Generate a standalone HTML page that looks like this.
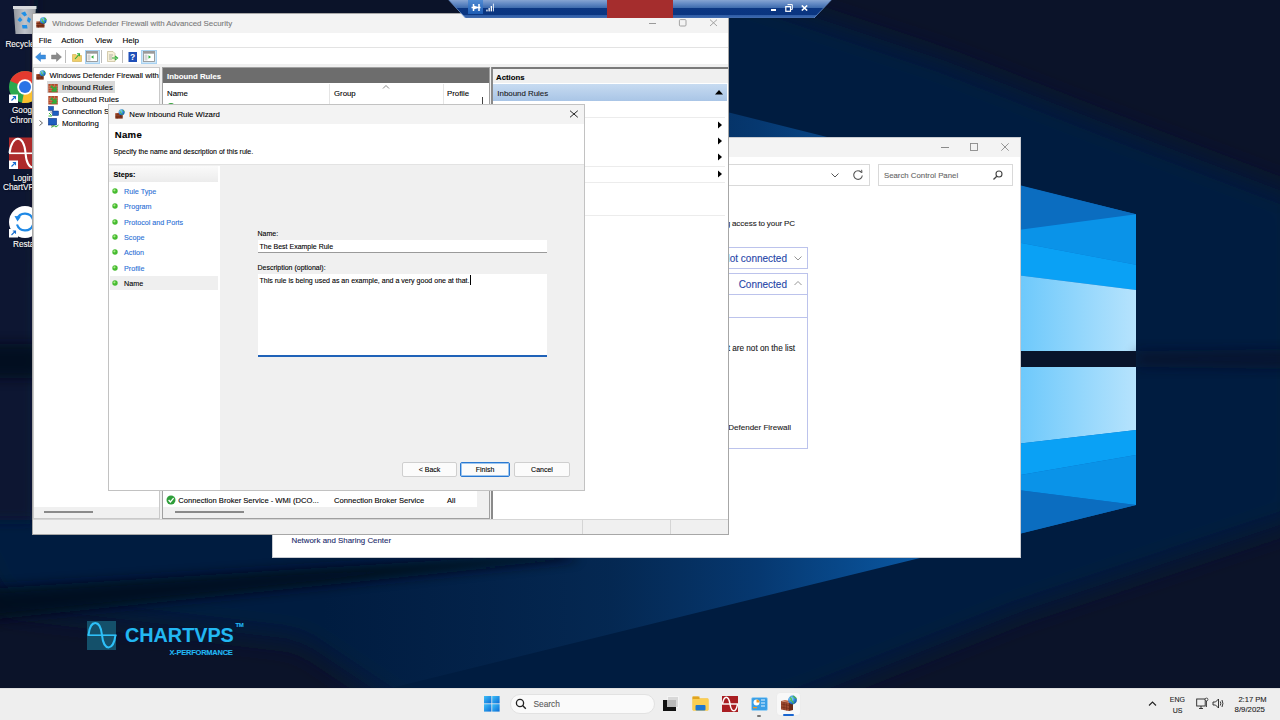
<!DOCTYPE html>
<html><head><meta charset="utf-8">
<style>
*{margin:0;padding:0;box-sizing:border-box}
html,body{width:1280px;height:720px;overflow:hidden}
body{position:relative;background:#0b1a36;font-family:"Liberation Sans",sans-serif;font-size:8px;color:#000}
.a{position:absolute}
.t{position:absolute;white-space:nowrap;line-height:1;-webkit-text-stroke:0.1px currentColor}
</style></head><body>

<!-- WALLPAPER -->
<svg class="a" style="left:0;top:0" width="1280" height="720" viewBox="0 0 1280 720">
<defs>
<linearGradient id="lp" x1="1021" y1="0" x2="1136" y2="0" gradientUnits="userSpaceOnUse">
<stop offset="0" stop-color="#6ec9fb"/><stop offset="1" stop-color="#b6e3fd"/>
</linearGradient>
<linearGradient id="beam" x1="200" y1="0" x2="1021" y2="0" gradientUnits="userSpaceOnUse">
<stop offset="0.15" stop-color="#0a2a55" stop-opacity="0"/><stop offset="0.35" stop-color="#062a55" stop-opacity="0.45"/><stop offset="0.5" stop-color="#052a55" stop-opacity="0.85"/><stop offset="0.68" stop-color="#063870"/><stop offset="0.88" stop-color="#0a58a3"/><stop offset="1" stop-color="#0b6cc0"/>
</linearGradient>
<filter id="bl" x="-20%" y="-20%" width="140%" height="140%"><feGaussianBlur stdDeviation="14"/></filter>
<filter id="bl2" x="-20%" y="-50%" width="140%" height="200%"><feGaussianBlur stdDeviation="6"/></filter>
</defs>
<rect width="1280" height="720" fill="#0b1329"/>
<!-- blue glow region -->
<polygon filter="url(#bl)" points="640,-40 762,0 943,60 1132,134 1300,198 1300,518 1020,612 800,700 640,740 420,720 300,640 0,605 -40,520 -40,300 32,260 200,200 500,80 700,-40" fill="#061c40"/>
<!-- left strip darker -->
<rect filter="url(#bl2)" x="-30" y="-30" width="64" height="550" fill="#0a1430"/>
<!-- left dark bar projection -->
<rect filter="url(#bl2)" x="-20" y="344" width="80" height="34" fill="#060c1c" opacity="0.8"/>
<!-- beams (T: y=185.9+0.246(x-1021); B: y=533.5-0.245(x-1021)) -->
<polygon points="0,-69.7 1136,214.2 1136,505 0,784" fill="url(#beam)"/>
<!-- top pane -->
<polygon points="1000,180.7 1136,214.2 1000,232.4" fill="#0b6dc0"/>
<polygon points="1000,232.4 1136,214.2 1136,264.8 1000,239" fill="#0a93e8"/>
<polygon points="1000,239 1136,264.8 1136,290 1000,273" fill="#0aa1f5"/>
<polygon points="1000,273 1136,290 1136,351 1000,351" fill="url(#lp)"/>
<!-- dark bar -->
<polygon filter="url(#bl2)" points="1136,351 1300,349 1300,369 1136,367" fill="#071024" opacity="0.5"/>
<rect x="1000" y="351" width="136" height="16" fill="#08142b"/>
<!-- lower pane -->
<polygon points="1000,367 1136,367 1136,430 1000,446" fill="url(#lp)"/>
<polygon points="1000,446 1136,430 1136,455 1000,478.6" fill="#0aa1f5"/>
<polygon points="1000,478.6 1136,455 1136,505 1000,487.8" fill="#0a93e8"/>
<polygon points="1000,487.8 1136,505 1000,538.6" fill="#0b6dc0"/>
<!-- dark projected bar below CP -->
<polygon filter="url(#bl2)" points="-20,589 560,553 580,559 -20,621" fill="#050b1a" opacity="0.85"/>
</svg>

<!-- DESKTOP ICONS -->
<svg class="a" style="left:0;top:0" width="40" height="260" viewBox="0 0 40 260">
<defs>
<linearGradient id="rb" x1="0" y1="0" x2="1" y2="0"><stop offset="0" stop-color="#9a9ea4"/><stop offset="0.5" stop-color="#c9cdd2"/><stop offset="1" stop-color="#a5a9ae"/></linearGradient>
</defs>
<!-- recycle bin -->
<path d="M13.5 6.5 H36 L34 34 H15.5 Z" fill="url(#rb)" opacity="0.95"/>
<rect x="13" y="6" width="23.5" height="3" fill="#d8dadd"/>
<g fill="#1f8fe6">
<path d="M21 13 L25 11.5 L27 15 L24.5 16.5 Z"/>
<path d="M17.5 20 L20 17 L22.5 20 L20 22 Z"/>
<path d="M22 25 L27 25 L27.5 28.5 L22.5 28.5 Z"/>
<path d="M28 17 L31 19 L29.5 23 L27 21 Z"/>
</g>
<!-- chrome -->
<circle cx="25" cy="87" r="16" fill="#2da94f"/>
<path d="M25 87 L10.2 80.9 A16 16 0 0 1 41 87 Z" fill="#e53a2f"/>
<path d="M25 87 L41 87 A16 16 0 0 1 25 103 L22 103 Z" fill="#fbc02d"/>
<circle cx="25" cy="87" r="7.8" fill="#fff"/>
<circle cx="25" cy="87" r="6" fill="#2b74e6"/>
<!-- chartvps login -->
<rect x="9" y="137.5" width="32" height="31.5" fill="#ad2a2b"/>
<rect x="9" y="152.5" width="32" height="1.6" fill="#fff"/>
<path d="M9.5 153 C12 134,24 134,25.5 153 S38 172,40 153" fill="none" stroke="#fff" stroke-width="2"/>
<!-- restart -->
<circle cx="25" cy="222" r="16" fill="#fff"/>
<path d="M17 219 A8.5 8.5 0 0 1 33 219.5" fill="none" stroke="#1e88e5" stroke-width="2.2"/>
<path d="M33 225 A8.5 8.5 0 0 1 17 224.5" fill="none" stroke="#1e88e5" stroke-width="2.2"/>
<path d="M14.5 216 L17.5 221.5 L21 216.5 Z" fill="#1e88e5"/>
<!-- shortcut arrows -->
<g>
<rect x="9" y="94.5" width="9" height="8.5" fill="#fff"/>
<path d="M11.5 100.5 L15.5 96.5 M12.8 96.5 H15.5 V99.2" fill="none" stroke="#1a6fd0" stroke-width="1.1"/>
<rect x="9" y="160.5" width="9" height="8.5" fill="#fff"/>
<path d="M11.5 166.5 L15.5 162.5 M12.8 162.5 H15.5 V165.2" fill="none" stroke="#1a6fd0" stroke-width="1.1"/>
<rect x="9" y="229" width="9" height="8.5" fill="#fff"/>
<path d="M11.5 235 L15.5 231 M12.8 231 H15.5 V233.7" fill="none" stroke="#1a6fd0" stroke-width="1.1"/>
</g>
</svg>
<div class="t" style="left:5.4px;top:40.7px;color:#fff;font-size:8.2px;text-shadow:0 0 2px #000">Recycle</div>
<div class="t" style="left:12px;top:107px;color:#fff;font-size:8.2px;text-shadow:0 0 2px #000">Goog</div>
<div class="t" style="left:10px;top:117.4px;color:#fff;font-size:8.2px;text-shadow:0 0 2px #000">Chron</div>
<div class="t" style="left:13px;top:174.6px;color:#fff;font-size:8.2px;text-shadow:0 0 2px #000">Login</div>
<div class="t" style="left:3px;top:183.6px;color:#fff;font-size:8.2px;text-shadow:0 0 2px #000">ChartVP</div>
<div class="t" style="left:13px;top:241.2px;color:#fff;font-size:8.2px;text-shadow:0 0 2px #000">Resta</div>

<!-- CHARTVPS LOGO -->
<div class="a" style="left:87.3px;top:620.6px;width:29.2px;height:29.2px;background:#14506a"></div>
<svg class="a" style="left:87px;top:620px" width="31" height="31" viewBox="0 0 31 31"><path d="M0.5 15.2 H29.5" stroke="#2ec0f8" stroke-width="1.6"/><path d="M1.5 15.2 C3 -1,13.5 -1,15 15.2 S26.5 31.5,28.5 15.2" fill="none" stroke="#2ec0f8" stroke-width="2"/></svg>
<div class="t" style="left:125px;top:625.5px;color:#22b8f2;font-size:19.8px;font-weight:bold">CHARTVPS</div>
<div class="t" style="left:235.5px;top:622.3px;color:#22b8f2;font-size:6px;font-weight:bold;letter-spacing:-0.3px">TM</div>
<div class="t" style="left:169.6px;top:649px;color:#22b8f2;font-size:7.5px;font-weight:bold;letter-spacing:-0.25px">X-PERFORMANCE</div>


<svg width="0" height="0" style="position:absolute"><defs>
<linearGradient id="brk" x1="0" y1="0" x2="0" y2="1"><stop offset="0" stop-color="#b25a3a"/><stop offset="1" stop-color="#7a2c14"/></linearGradient>
<radialGradient id="glb" cx="0.35" cy="0.35" r="0.7"><stop offset="0" stop-color="#9fe0ff"/><stop offset="0.6" stop-color="#2a86d8"/><stop offset="1" stop-color="#1657a8"/></radialGradient>
<symbol id="fwi" viewBox="0 0 10 10">
 <rect x="0.3" y="4" width="7.4" height="5.6" fill="url(#brk)"/>
 <path d="M0.3 5.9 H7.7 M0.3 7.8 H7.7 M3 4 V5.9 M5.6 5.9 V7.8 M2.2 7.8 V9.6" stroke="#5a1e0c" stroke-width="0.5"/>
 <circle cx="6.6" cy="3.2" r="3" fill="url(#glb)"/>
 <path d="M5 1.6 Q6.2 2.4 5.6 3.6 Q6.8 4 7.4 5.6 M7.6 0.8 Q8.6 2 9.4 2.6" fill="none" stroke="#4fbf3a" stroke-width="1"/>
</symbol>
<symbol id="inb" viewBox="0 0 11 10">
 <rect x="0.3" y="1" width="9.5" height="8.5" fill="#b04a2c"/>
 <path d="M0.3 3.2 H9.8 M0.3 5.4 H9.8 M0.3 7.6 H9.8 M3 1 V3.2 M6.5 1 V3.2 M1.8 3.2 V5.4 M5 3.2 V5.4 M8.2 3.2 V5.4 M3 5.4 V7.6 M6.5 5.4 V7.6" stroke="#e0a080" stroke-width="0.45"/>
 <path d="M3 3 L7 7 M7.8 3.6 V7.8 H3.6" fill="none" stroke="#2fae3a" stroke-width="1.8"/>
</symbol>
<symbol id="conn" viewBox="0 0 11 11">
 <rect x="0.5" y="0.5" width="5" height="4" fill="#1f5fc0" stroke="#0b2f80" stroke-width="0.5"/>
 <rect x="4.5" y="5" width="6" height="4.5" fill="#1f5fc0" stroke="#0b2f80" stroke-width="0.5"/>
 <path d="M1 7 L3.5 9.5 M0.5 10 H4" stroke="#3ab83a" stroke-width="1"/>
 <path d="M3 4.5 V7 H4.5" fill="none" stroke="#777" stroke-width="0.6"/>
</symbol>
<symbol id="mon" viewBox="0 0 11 11">
 <rect x="0.5" y="0.5" width="8" height="6.5" fill="#1f5fc0" stroke="#0b2f80" stroke-width="0.6"/>
 <rect x="3" y="7" width="3" height="1.5" fill="#888"/>
 <path d="M3.5 9.5 L6 7.5 L8 9 L10.5 7" fill="none" stroke="#3ab83a" stroke-width="1"/>
</symbol>
<symbol id="winbtn" viewBox="0 0 12 11">
 <rect x="0.5" y="0.5" width="11" height="10" fill="#fff" stroke="#8a8a8a" stroke-width="0.8"/>
 <rect x="0.5" y="0.5" width="11" height="2.2" fill="#9a9a9a"/>
 <rect x="1.5" y="3.5" width="3" height="6" fill="#d5d5d5"/>
</symbol>
</defs></svg>
<div class="a" style="left:272px;top:137px;width:749px;height:421px;background:#fff;border:1px solid #c9ccd2"></div>
<div class="a" style="left:273px;top:138px;width:747px;height:19px;background:#f3f3f3"></div>
<div class="a" style="left:941px;top:147px;width:8px;height:1px;background:#8a8a8a"></div>
<svg class="a" style="left:969px;top:142px;" width="10" height="10" viewBox="0 0 10 10"><rect x="1.5" y="1.5" width="7" height="7" fill="none" stroke="#8a8a8a" stroke-width="0.9"/></svg>
<svg class="a" style="left:1000px;top:142px;" width="10" height="10" viewBox="0 0 10 10"><path d="M1.3 1.3 L8.7 8.7 M8.7 1.3 L1.3 8.7" stroke="#8a8a8a" stroke-width="0.9"/></svg>
<div class="a" style="left:700px;top:164px;width:170px;height:22px;background:#fff;border:1px solid #d9d9d9"></div>
<svg class="a" style="left:830px;top:170px;" width="10" height="10" viewBox="0 0 10 10"><path d="M1.5 3.5 L5 7 L8.5 3.5" fill="none" stroke="#555" stroke-width="1"/></svg>
<svg class="a" style="left:852px;top:169px;" width="12" height="12" viewBox="0 0 12 12"><path d="M9.5 3.5 A4.3 4.3 0 1 0 10.3 6.5" fill="none" stroke="#555" stroke-width="1.1"/><path d="M7.5 2 L10 3.6 L9.6 0.8" fill="none" stroke="#555" stroke-width="1"/></svg>
<div class="a" style="left:878px;top:164px;width:135px;height:22px;background:#fff;border:1px solid #d9d9d9"></div>
<div class="t" style="left:884px;top:171.99px;font-size:7.8px;color:#666;">Search Control Panel</div>
<svg class="a" style="left:992px;top:169px;" width="12" height="12" viewBox="0 0 12 12"><circle cx="7" cy="5" r="3" fill="none" stroke="#444" stroke-width="1.1"/><line x1="4.8" y1="7.2" x2="1.5" y2="10.5" stroke="#444" stroke-width="1.3"/></svg>
<div class="t" style="left:560px;top:220.49px;font-size:8.0px;color:#1a1a1a;width:235px;text-align:right;word-spacing:-0.6px">Help protect your PC by allowing access to your PC</div>
<div class="a" style="left:600px;top:247px;width:208px;height:22px;background:#fff;border:1px solid #bcc3ec"></div>
<div class="t" style="left:600px;top:254.02px;font-size:10.0px;color:#2545a8;text-align:right;width:187px">Not connected</div>
<svg class="a" style="left:792px;top:252px;" width="12" height="12" viewBox="0 0 12 12"><path d="M2.5 4.5 L6 8 L9.5 4.5" fill="none" stroke="#8a8a8a" stroke-width="0.9"/></svg>
<div class="a" style="left:600px;top:273px;width:208px;height:176px;background:#fff;border:1px solid #bcc3ec"></div>
<div class="a" style="left:600px;top:294px;width:208px;height:24px;border-top:1px solid #bcc3ec;border-bottom:1px solid #bcc3ec"></div>
<div class="t" style="left:600px;top:280.02px;font-size:10.0px;color:#2545a8;text-align:right;width:187px">Connected</div>
<svg class="a" style="left:792px;top:277px;" width="12" height="12" viewBox="0 0 12 12"><path d="M2.5 8 L6 4.5 L9.5 8" fill="none" stroke="#8a8a8a" stroke-width="0.9"/></svg>
<div class="t" style="left:560px;top:344.56px;font-size:8.2px;color:#1a1a1a;text-align:right;width:235px">Block all connections to apps that are not on the list</div>
<div class="t" style="left:560px;top:424.49px;font-size:8.0px;color:#1a1a1a;text-align:right;width:231px">Windows Defender Firewall</div>
<div class="t" style="left:291.5px;top:537.30px;font-size:7.9px;color:#1a2a6a;">Network and Sharing Center</div>
<div class="a" style="left:32px;top:13px;width:697px;height:522px;background:#fff;border:1px solid #a7a7a7"></div>
<div class="a" style="left:33px;top:14px;width:695px;height:19px;background:#f3f3f3"></div>
<svg class="a" style="left:36px;top:17px;" width="11" height="11" viewBox="0 0 11 11"><use href="#fwi" width="11" height="11"/></svg>
<div class="t" style="left:52.3px;top:20.40px;font-size:7.9px;color:#7a7a7a;">Windows Defender Firewall with Advanced Security</div>
<div class="a" style="left:649px;top:22.5px;width:7px;height:1px;background:#9a9a9a"></div>
<svg class="a" style="left:678px;top:18px;" width="10" height="10" viewBox="0 0 10 10"><rect x="1.4" y="1.6" width="6.6" height="6.4" rx="1" fill="none" stroke="#9a9a9a" stroke-width="0.9"/></svg>
<svg class="a" style="left:709px;top:18px;" width="10" height="10" viewBox="0 0 10 10"><path d="M1 1.6 L8 8 M8 1.6 L1 8" stroke="#9a9a9a" stroke-width="0.9"/></svg>
<div class="a" style="left:33px;top:33px;width:695px;height:15px;background:#fff;border-bottom:1px solid #e3e3e3"></div>
<div class="t" style="left:38.7px;top:36.79px;font-size:8.0px;color:#000;">File</div>
<div class="t" style="left:61.2px;top:36.79px;font-size:8.0px;color:#000;">Action</div>
<div class="t" style="left:95px;top:36.79px;font-size:8.0px;color:#000;">View</div>
<div class="t" style="left:122.6px;top:36.79px;font-size:8.0px;color:#000;">Help</div>
<div class="a" style="left:33px;top:48px;width:695px;height:16px;background:#fff"></div>
<div class="a" style="left:33px;top:64px;width:695px;height:3px;background:#f0f0f0"></div>
<svg class="a" style="left:35px;top:52px;" width="11" height="10" viewBox="0 0 11 10"><path d="M0.5 5 L5.5 0.5 V3 H10.5 V7 H5.5 V9.5 Z" fill="#3b8fe0" stroke="#2a6fc0" stroke-width="0.4"/></svg>
<svg class="a" style="left:51px;top:52px;" width="11" height="10" viewBox="0 0 11 10"><path d="M10.5 5 L5.5 0.5 V3 H0.5 V7 H5.5 V9.5 Z" fill="#8a8a8a" stroke="#777" stroke-width="0.4"/></svg>
<div class="a" style="left:65px;top:50px;width:1px;height:13px;background:#bdbdbd"></div>
<svg class="a" style="left:72px;top:52px;" width="10" height="10" viewBox="0 0 10 10"><path d="M0.5 2.5 H4 L5 3.5 H9.5 V9.5 H0.5 Z" fill="#f0cf6a" stroke="#c9a030" stroke-width="0.5"/><path d="M3 7 L7 2.5 M5 1.8 H7.5 V4.3" fill="none" stroke="#2fae3a" stroke-width="1.1"/></svg>
<div class="a" style="left:84.5px;top:49.5px;width:15px;height:14px;background:#cde6f7;border:1px solid #a8d2f2"></div>
<svg class="a" style="left:86px;top:51px;" width="12" height="11" viewBox="0 0 12 11"><use href="#winbtn" width="12" height="11"/><path d="M5 6 L7.5 4.2 V7.8 Z" fill="#2fae3a"/></svg>
<div class="a" style="left:101px;top:50px;width:1px;height:13px;background:#bdbdbd"></div>
<svg class="a" style="left:107px;top:51px;" width="12" height="11" viewBox="0 0 12 11"><path d="M0.5 0.5 H6 L8 2.5 V10.5 H0.5 Z" fill="#f6f0d8" stroke="#b0a070" stroke-width="0.5"/><path d="M2 4 H6 M2 6 H5 M2 8 H5" stroke="#888" stroke-width="0.6"/><path d="M5 7 H9 M8 5 L10.5 7 L8 9" fill="none" stroke="#2fae3a" stroke-width="1.2"/></svg>
<div class="a" style="left:122px;top:50px;width:1px;height:13px;background:#bdbdbd"></div>
<svg class="a" style="left:128px;top:52px;" width="10" height="10" viewBox="0 0 10 10"><rect x="0.5" y="0" width="8.5" height="10" fill="#1f4fb8"/><text x="4.7" y="8.3" font-size="8.5" font-family="Liberation Sans" font-weight="bold" fill="#fff" text-anchor="middle">?</text></svg>
<div class="a" style="left:141px;top:49.5px;width:16px;height:14px;background:#cde6f7;border:1px solid #a8d2f2"></div>
<svg class="a" style="left:143px;top:51px;" width="12" height="11" viewBox="0 0 12 11"><use href="#winbtn" width="12" height="11"/><path d="M8 6 L5.5 4.2 V7.8 Z" fill="#2fae3a" transform="translate(0,0)"/></svg>
<div class="a" style="left:33px;top:67px;width:127px;height:452px;background:#fff;border:1px solid #c9c9c9"></div>
<div class="a" style="left:34px;top:507px;width:125px;height:11px;background:#f0f0f0"></div>
<div class="a" style="left:44px;top:511px;width:49px;height:2px;background:#8a8a8a"></div>
<div class="a" style="left:47px;top:81px;width:68px;height:12px;background:#d9d9d9"></div>
<svg class="a" style="left:36px;top:70px;" width="10" height="10" viewBox="0 0 10 10"><use href="#fwi" width="10" height="10"/></svg>
<svg class="a" style="left:48px;top:83px;" width="11" height="10" viewBox="0 0 11 10"><use href="#inb" width="11" height="10"/></svg>
<svg class="a" style="left:48px;top:95px;" width="11" height="10" viewBox="0 0 11 10"><use href="#inb" width="11" height="10"/></svg>
<svg class="a" style="left:48px;top:106px;" width="11" height="11" viewBox="0 0 11 11"><use href="#conn" width="11" height="11"/></svg>
<svg class="a" style="left:48px;top:118px;" width="11" height="11" viewBox="0 0 11 11"><use href="#mon" width="11" height="11"/></svg>
<div class="t" style="left:49.5px;top:72.00px;font-size:7.7px;color:#000;">Windows Defender Firewall with Advanced Security</div>
<div class="t" style="left:62px;top:84.00px;font-size:7.9px;color:#000;">Inbound Rules</div>
<div class="t" style="left:62px;top:96.00px;font-size:7.9px;color:#000;">Outbound Rules</div>
<div class="t" style="left:62px;top:108.00px;font-size:7.9px;color:#000;">Connection Security Rules</div>
<div class="t" style="left:62px;top:120.00px;font-size:7.9px;color:#000;">Monitoring</div>
<svg class="a" style="left:37px;top:119px;" width="8" height="8" viewBox="0 0 8 8"><path d="M2.5 1.5 L5.5 4 L2.5 6.5" fill="none" stroke="#666" stroke-width="1"/></svg>
<div class="a" style="left:160px;top:67px;width:2px;height:452px;background:#f0f0f0"></div>
<div class="a" style="left:162px;top:67px;width:328px;height:452px;background:#fff;border:1px solid #a0a0a0"></div>
<div class="a" style="left:163px;top:68px;width:326px;height:15px;background:#6d6d6d"></div>
<div class="t" style="left:167px;top:72.50px;font-size:7.8px;color:#fff;font-weight:bold;">Inbound Rules</div>
<div class="t" style="left:167px;top:89.99px;font-size:7.8px;color:#000;">Name</div>
<div class="t" style="left:334px;top:89.99px;font-size:7.8px;color:#000;">Group</div>
<div class="t" style="left:447px;top:89.99px;font-size:7.8px;color:#000;">Profile</div>
<div class="a" style="left:329px;top:84px;width:1px;height:20px;background:#e5e5e5"></div>
<div class="a" style="left:443px;top:84px;width:1px;height:20px;background:#e5e5e5"></div>
<svg class="a" style="left:382px;top:84px;" width="8" height="6" viewBox="0 0 8 6"><path d="M1 4.5 L4 1.5 L7 4.5" fill="none" stroke="#888" stroke-width="1"/></svg>
<div class="a" style="left:482px;top:97px;width:1px;height:10px;background:#444"></div>
<svg class="a" style="left:166px;top:102px;" width="10" height="3" viewBox="0 0 10 3"><circle cx="5" cy="5.5" r="4.5" fill="#3aa53f"/></svg>
<svg class="a" style="left:495px;top:101px;" width="8" height="4" viewBox="0 0 8 4"><path d="M1 4 L4 1 L7 4 Z" fill="#f2a33a"/></svg>
<svg class="a" style="left:166px;top:495px;" width="10" height="10" viewBox="0 0 10 10"><circle cx="5" cy="5" r="4.5" fill="#2f9e3a"/><path d="M2.6 5 L4.4 7 L7.6 3.2" fill="none" stroke="#fff" stroke-width="1.3"/></svg>
<div class="t" style="left:178.3px;top:497.40px;font-size:7.6px;color:#000;">Connection Broker Service - WMI (DCO...</div>
<div class="t" style="left:334px;top:497.40px;font-size:7.6px;color:#000;">Connection Broker Service</div>
<div class="t" style="left:447px;top:497.40px;font-size:7.6px;color:#000;">All</div>
<div class="a" style="left:477px;top:490px;width:12px;height:17px;background:#f0f0f0"></div>
<div class="a" style="left:163px;top:507px;width:326px;height:11px;background:#f0f0f0"></div>
<div class="a" style="left:175px;top:511px;width:69px;height:2px;background:#8a8a8a"></div>
<div class="a" style="left:490px;top:67px;width:2px;height:452px;background:#f0f0f0"></div>
<div class="a" style="left:491px;top:67px;width:237px;height:452px;background:#fff;border-left:2px solid #8a8a8a"></div>
<div class="a" style="left:492px;top:67px;width:236px;height:2px;background:#7a7a7a"></div>
<div class="a" style="left:493px;top:69px;width:235px;height:14px;background:#f0f0f0"></div>
<div class="t" style="left:496px;top:73.70px;font-size:7.8px;color:#000;font-weight:bold;">Actions</div>
<div class="a" style="left:493px;top:84px;width:234px;height:17px;background:linear-gradient(#c7dbf1,#a9c5e6)"></div>
<div class="t" style="left:497.3px;top:89.70px;font-size:7.9px;color:#1a1a1a;">Inbound Rules</div>
<svg class="a" style="left:714px;top:88px;" width="10" height="8" viewBox="0 0 10 8"><path d="M1 6.5 L5 2 L9 6.5 Z" fill="#000"/></svg>
<div class="a" style="left:500px;top:117px;width:225px;height:1px;background:#ececec"></div>
<div class="a" style="left:500px;top:166px;width:225px;height:1px;background:#ececec"></div>
<div class="a" style="left:500px;top:182px;width:225px;height:1px;background:#ececec"></div>
<div class="a" style="left:500px;top:215px;width:225px;height:1px;background:#ececec"></div>
<svg class="a" style="left:716px;top:121px;" width="8" height="8" viewBox="0 0 8 8"><path d="M2 0.5 L6 4 L2 7.5 Z" fill="#000"/></svg>
<svg class="a" style="left:716px;top:137px;" width="8" height="8" viewBox="0 0 8 8"><path d="M2 0.5 L6 4 L2 7.5 Z" fill="#000"/></svg>
<svg class="a" style="left:716px;top:153px;" width="8" height="8" viewBox="0 0 8 8"><path d="M2 0.5 L6 4 L2 7.5 Z" fill="#000"/></svg>
<svg class="a" style="left:716px;top:170px;" width="8" height="8" viewBox="0 0 8 8"><path d="M2 0.5 L6 4 L2 7.5 Z" fill="#000"/></svg>
<div class="a" style="left:33px;top:519px;width:695px;height:15px;background:#f0f0f0;border-top:1px solid #d5d5d5"></div>
<div class="a" style="left:582px;top:520px;width:1px;height:14px;background:#d5d5d5"></div>
<div class="a" style="left:670px;top:520px;width:1px;height:14px;background:#d5d5d5"></div>
<div class="a" style="left:108px;top:104px;width:477px;height:387px;background:#f0f0f0;border:1px solid #c2c2c2"></div>
<div class="a" style="left:109px;top:105px;width:475px;height:19px;background:#f3f3f3"></div>
<svg class="a" style="left:115px;top:109px;" width="10" height="10" viewBox="0 0 10 10"><use href="#fwi" width="10" height="10"/></svg>
<div class="t" style="left:129.3px;top:111.29px;font-size:7.8px;color:#000;">New Inbound Rule Wizard</div>
<svg class="a" style="left:569px;top:110px;" width="10" height="8" viewBox="0 0 10 8"><path d="M1 0.7 L8.8 7.3 M8.8 0.7 L1 7.3" stroke="#111" stroke-width="0.9"/></svg>
<div class="a" style="left:109px;top:124px;width:475px;height:41px;background:#fff;border-bottom:1px solid #e3e3e3"></div>
<div class="t" style="left:114.75px;top:130.25px;font-size:9.6px;color:#000;font-weight:bold;letter-spacing:0.3px">Name</div>
<div class="t" style="left:113.5px;top:148.29px;font-size:7.0px;color:#000;">Specify the name and description of this rule.</div>
<div class="a" style="left:109px;top:166px;width:111px;height:324px;background:#fff"></div>
<div class="a" style="left:109px;top:166px;width:109px;height:16px;background:linear-gradient(#fafafa,#ececec)"></div>
<div class="t" style="left:113.5px;top:171.19px;font-size:7.2px;color:#000;font-weight:bold;">Steps:</div>
<div class="a" style="left:110px;top:276px;width:108px;height:14px;background:#efefef"></div>
<svg class="a" style="left:112px;top:188px;" width="6" height="6" viewBox="0 0 6 6"><circle cx="3" cy="3" r="2.7" fill="#46bb30"/><circle cx="2.4" cy="2.3" r="1.1" fill="#a8ea88"/></svg>
<div class="t" style="left:124px;top:188.00px;font-size:7.2px;color:#2a6fd6;">Rule Type</div>
<svg class="a" style="left:112px;top:203.3px;" width="6" height="6" viewBox="0 0 6 6"><circle cx="3" cy="3" r="2.7" fill="#46bb30"/><circle cx="2.4" cy="2.3" r="1.1" fill="#a8ea88"/></svg>
<div class="t" style="left:124px;top:203.30px;font-size:7.2px;color:#2a6fd6;">Program</div>
<svg class="a" style="left:112px;top:218.6px;" width="6" height="6" viewBox="0 0 6 6"><circle cx="3" cy="3" r="2.7" fill="#46bb30"/><circle cx="2.4" cy="2.3" r="1.1" fill="#a8ea88"/></svg>
<div class="t" style="left:124px;top:218.59px;font-size:7.2px;color:#2a6fd6;">Protocol and Ports</div>
<svg class="a" style="left:112px;top:234px;" width="6" height="6" viewBox="0 0 6 6"><circle cx="3" cy="3" r="2.7" fill="#46bb30"/><circle cx="2.4" cy="2.3" r="1.1" fill="#a8ea88"/></svg>
<div class="t" style="left:124px;top:234.00px;font-size:7.2px;color:#2a6fd6;">Scope</div>
<svg class="a" style="left:112px;top:249.3px;" width="6" height="6" viewBox="0 0 6 6"><circle cx="3" cy="3" r="2.7" fill="#46bb30"/><circle cx="2.4" cy="2.3" r="1.1" fill="#a8ea88"/></svg>
<div class="t" style="left:124px;top:249.30px;font-size:7.2px;color:#2a6fd6;">Action</div>
<svg class="a" style="left:112px;top:264.6px;" width="6" height="6" viewBox="0 0 6 6"><circle cx="3" cy="3" r="2.7" fill="#46bb30"/><circle cx="2.4" cy="2.3" r="1.1" fill="#a8ea88"/></svg>
<div class="t" style="left:124px;top:264.60px;font-size:7.2px;color:#2a6fd6;">Profile</div>
<svg class="a" style="left:112px;top:280px;" width="6" height="6" viewBox="0 0 6 6"><circle cx="3" cy="3" r="2.7" fill="#46bb30"/><circle cx="2.4" cy="2.3" r="1.1" fill="#a8ea88"/></svg>
<div class="t" style="left:124px;top:280.00px;font-size:7.2px;color:#000;">Name</div>
<div class="a" style="left:220px;top:166px;width:364px;height:324px;background:#f0f0f0"></div>
<div class="t" style="left:257.5px;top:229.99px;font-size:7.0px;color:#000;">Name:</div>
<div class="a" style="left:258px;top:240px;width:289px;height:13px;background:#fff;border-bottom:1px solid #9a9a9a"></div>
<div class="t" style="left:259.5px;top:242.79px;font-size:7.0px;color:#000;">The Best Example Rule</div>
<div class="t" style="left:257.5px;top:263.99px;font-size:7.0px;color:#000;">Description (optional):</div>
<div class="a" style="left:258px;top:274px;width:289px;height:83px;background:#fff;border-bottom:2px solid #1f62b8"></div>
<div class="t" style="left:259.5px;top:277.00px;font-size:7.05px;color:#000;">This rule is being used as an example, and a very good one at that.</div>
<div class="a" style="left:470px;top:275px;width:1px;height:10px;background:#000"></div>
<div class="a" style="left:402px;top:462px;width:55px;height:15px;background:#fbfbfb;border:1px solid #cfcfcf;border-radius:2px"></div>
<div class="t" style="left:402px;top:466.49px;font-size:7.0px;color:#000;width:55px;text-align:center">&lt; Back</div>
<div class="a" style="left:460px;top:462px;width:50px;height:15px;background:#fbfbfb;border:1px solid #2a78d0;border-radius:2px;box-shadow:inset 0 0 0 1px #9cc6f0"></div>
<div class="t" style="left:460px;top:466.49px;font-size:7.0px;color:#000;width:50px;text-align:center">Finish</div>
<div class="a" style="left:514px;top:462px;width:56px;height:15px;background:#fbfbfb;border:1px solid #cfcfcf;border-radius:2px"></div>
<div class="t" style="left:514px;top:466.49px;font-size:7.0px;color:#000;width:56px;text-align:center">Cancel</div>
<svg class="a" style="left:440px;top:0" width="400" height="19" viewBox="0 0 400 19">
<defs><linearGradient id="rdp" x1="0" y1="0" x2="0" y2="19" gradientUnits="userSpaceOnUse"><stop offset="0" stop-color="#86a4d2"/><stop offset="0.22" stop-color="#5e86c2"/><stop offset="0.42" stop-color="#3d6aac"/><stop offset="0.44" stop-color="#0b3682"/><stop offset="0.8" stop-color="#0a3580"/><stop offset="0.82" stop-color="#3a68b0"/><stop offset="0.92" stop-color="#2f5ca5"/><stop offset="0.93" stop-color="#c9d2e2"/><stop offset="1" stop-color="#c9d2e2"/></linearGradient></defs>
<polygon points="8.75,0 391.25,0 374,18 25.5,18" fill="url(#rdp)"/>
<line x1="8.75" y1="0" x2="25.5" y2="18" stroke="#6a90cc" stroke-width="0.8"/>
<line x1="391.25" y1="0" x2="374" y2="18" stroke="#6a90cc" stroke-width="0.8"/>
</svg>
<div class="a" style="left:607px;top:0px;width:66px;height:17.5px;background:#a52d2d"></div>
<div class="a" style="left:468px;top:0px;width:15px;height:13.5px;background:linear-gradient(#4f8ad2,#1d5cb4)"></div>
<svg class="a" style="left:471px;top:3px;" width="10" height="9" viewBox="0 0 10 9"><path d="M0.5 4.5 H9.5 M2.5 1 V8 M8 1 V8" stroke="#fff" stroke-width="1.5"/><path d="M2.5 2.5 L8 4.5 L2.5 6.5" fill="#fff"/></svg>
<svg class="a" style="left:486px;top:3px;" width="9" height="9" viewBox="0 0 9 9"><rect x="0.3" y="6.6" width="1.3" height="1.8" fill="#fff"/><rect x="2.5" y="5" width="1.3" height="3.4" fill="#fff"/><rect x="4.7" y="3" width="1.3" height="5.4" fill="#fff"/><rect x="6.9" y="0.6" width="1" height="7.8" fill="#dfe8f5"/></svg>
<div class="a" style="left:771px;top:9px;width:5px;height:2px;background:#fff"></div>
<svg class="a" style="left:785px;top:4px;" width="8" height="8" viewBox="0 0 8 8"><path d="M2.5 0.6 H7.3 V5.4 H5.5" fill="none" stroke="#fff" stroke-width="1"/><rect x="0.8" y="2.6" width="4.7" height="4.7" fill="none" stroke="#fff" stroke-width="1.2"/></svg>
<svg class="a" style="left:801px;top:4.5px;" width="7" height="6" viewBox="0 0 7 6"><path d="M0.8 0.5 L6.2 5.5 M6.2 0.5 L0.8 5.5" stroke="#fff" stroke-width="1.6"/></svg>
<div class="a" style="left:0px;top:688px;width:1280px;height:32px;background:#eeeeee;border-top:1px solid #e0e0e0"></div>
<svg class="a" style="left:484px;top:696px;" width="16" height="16" viewBox="0 0 16 16"><defs><linearGradient id="wl" x1="0" y1="0" x2="1" y2="1"><stop offset="0" stop-color="#3fc0f8"/><stop offset="1" stop-color="#0a6cd6"/></linearGradient></defs><rect x="0" y="0" width="7.4" height="7.4" fill="url(#wl)"/><rect x="8.2" y="0" width="7.4" height="7.4" fill="url(#wl)"/><rect x="0" y="8.2" width="7.4" height="7.4" fill="url(#wl)"/><rect x="8.2" y="8.2" width="7.4" height="7.4" fill="url(#wl)"/></svg>
<div class="a" style="left:509.5px;top:693.5px;width:145px;height:20px;background:#fafafa;border:1px solid #e2e2e2;border-radius:10px"></div>
<svg class="a" style="left:515px;top:698px;" width="12" height="12" viewBox="0 0 12 12"><circle cx="5" cy="5" r="3.6" fill="none" stroke="#222" stroke-width="1.3"/><line x1="7.6" y1="7.6" x2="10.8" y2="10.8" stroke="#222" stroke-width="1.4"/></svg>
<div class="t" style="left:533.4px;top:700.36px;font-size:8.4px;color:#5a5a5a;">Search</div>
<div class="a" style="left:667px;top:696px;width:12px;height:12px;background:#d8d8d8;border:1px solid #f4f4f4"></div>
<div class="a" style="left:663px;top:700px;width:12.5px;height:11px;background:#111"></div>
<div class="a" style="left:667px;top:700px;width:8.5px;height:7px;background:#b8b8b8"></div>
<svg class="a" style="left:692px;top:696px;" width="17" height="15" viewBox="0 0 17 15"><path d="M0.5 1.5 Q0.5 0.5 1.5 0.5 H6 L7.5 2.2 H15.5 Q16.5 2.2 16.5 3.2 V13.5 Q16.5 14.5 15.5 14.5 H1.5 Q0.5 14.5 0.5 13.5 Z" fill="#f7c443"/><rect x="0.5" y="0.5" width="7" height="3" fill="#e0a420"/><rect x="0.5" y="3" width="16" height="11.5" rx="1" fill="#fbcf52"/><rect x="3.5" y="9" width="10" height="5.5" rx="1" fill="#1f78d1"/></svg>
<svg class="a" style="left:722px;top:696px;" width="16" height="16" viewBox="0 0 16 16"><rect width="16" height="16" fill="#a91e22"/><rect y="7.3" width="16" height="1.4" fill="#fff"/><path d="M0.5 8 C2 -1, 6.5 -1, 8 8 S14 17, 15.5 8" fill="none" stroke="#fff" stroke-width="1.5"/></svg>
<svg class="a" style="left:751px;top:697px;" width="17" height="14" viewBox="0 0 17 14"><rect x="0.5" y="0.5" width="16" height="13" rx="1.5" fill="#3a9fe6" stroke="#9cd0f4" stroke-width="0.8"/><circle cx="5.5" cy="5.5" r="3" fill="#fff"/><path d="M5.5 5.5 V2.5 A3 3 0 0 1 8.5 5.5 Z" fill="#f39a1e"/><rect x="2" y="10" width="4" height="1.3" fill="#f39a1e"/><path d="M10 3 H14 M10 6 H14 M10 9 H14" stroke="#e0f2ff" stroke-width="1"/></svg>
<div class="a" style="left:757px;top:715px;width:4px;height:1.5px;background:#777;border-radius:1px"></div>
<div class="a" style="left:776px;top:691.5px;width:25px;height:24.5px;background:#f8f8f8;border:1px solid #ececec;border-radius:4px"></div>
<svg class="a" style="left:780px;top:695px;" width="18" height="17" viewBox="0 0 18 17"><path d="M1 6 L9 7.5 V16 L1 14.5 Z" fill="#9c4a30"/><path d="M9 7.5 L13 6.5 V15 L9 16 Z" fill="#6d2a16"/><path d="M1 6 L5 5 L13 6.5 L9 7.5 Z" fill="#c06a48"/><path d="M1 9 L9 10.5 M1 12 L9 13.5 M4 7 V15 M6.5 8.5 V15.5" stroke="#6a2412" stroke-width="0.5"/><circle cx="12.5" cy="5" r="4.4" fill="url(#glb)"/><path d="M10 2.5 Q12 3.5 11 5.5 Q13 6 13.5 8.5 M13 0.8 Q14.5 2.5 16.5 3.5" fill="none" stroke="#52c13c" stroke-width="1.2"/></svg>
<div class="a" style="left:783.3px;top:714.4px;width:10.6px;height:1.8px;background:#1a66d0;border-radius:1px"></div>
<svg class="a" style="left:1148px;top:700px;" width="9" height="7" viewBox="0 0 9 7"><path d="M1 5.5 L4.5 2 L8 5.5" fill="none" stroke="#222" stroke-width="1.1"/></svg>
<div class="t" style="left:1169.8px;top:695.99px;font-size:7.0px;color:#222;">ENG</div>
<div class="t" style="left:1172.8px;top:706.59px;font-size:7.0px;color:#222;">US</div>
<svg class="a" style="left:1196px;top:697px;" width="13" height="13" viewBox="0 0 13 13"><rect x="0.7" y="2" width="8.5" height="7" fill="none" stroke="#222" stroke-width="0.9"/><path d="M3 11.5 H7 M5 9 V11.5" stroke="#222" stroke-width="0.9"/><circle cx="10.5" cy="2.5" r="1.4" fill="#fff" stroke="#222" stroke-width="0.8"/><path d="M10.5 4 V10" stroke="#222" stroke-width="0.8"/></svg>
<svg class="a" style="left:1212px;top:697px;" width="13" height="13" viewBox="0 0 13 13"><path d="M1 5 H3.5 L6.5 2 V11 L3.5 8 H1 Z" fill="none" stroke="#222" stroke-width="0.9"/><path d="M8.3 4.5 Q9.3 6.5 8.3 8.5 M10 3 Q11.8 6.5 10 10" fill="none" stroke="#222" stroke-width="0.9"/></svg>
<div class="t" style="left:1238.4px;top:695.50px;font-size:7.6px;color:#222;">2:17 PM</div>
<div class="t" style="left:1234.6px;top:705.99px;font-size:7.8px;color:#222;">8/9/2025</div>
</body></html>
